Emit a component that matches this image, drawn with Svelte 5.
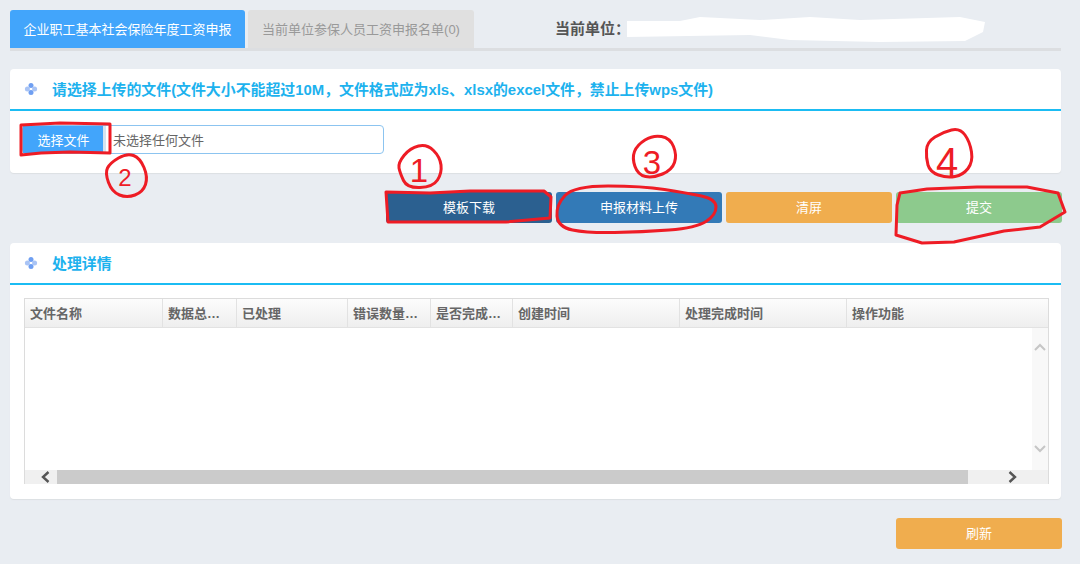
<script>
  const columns = [
    { label: '文件名称', width: 138 },
    { label: '数据总量统计', width: 74 },
    { label: '已处理', width: 111 },
    { label: '错误数量统计', width: 83 },
    { label: '是否完成状态', width: 82 },
    { label: '创建时间', width: 167 },
    { label: '处理完成时间', width: 167 },
    { label: '操作功能', width: 202 }
  ];

  const actions = [
    { label: '模板下载', tone: 'navy' },
    { label: '申报材料上传', tone: 'blue' },
    { label: '清屏', tone: 'orange' },
    { label: '提交', tone: 'green' }
  ];

  // closed smooth line through hand picked points
  function blob(pts) {
    let d = '';
    pts.forEach((p, i) => {
      const next = pts[(i + 1) % pts.length];
      const mx = (p[0] + next[0]) / 2;
      const my = (p[1] + next[1]) / 2;
      if (i === 0) {
        const last = pts[pts.length - 1];
        d += `M${(last[0] + p[0]) / 2} ${(last[1] + p[1]) / 2} `;
      }
      d += `Q${p[0]} ${p[1]} ${mx} ${my} `;
    });
    return d + 'Z';
  }

  // hand drawn marks on top of the screenshot
  const scribbles = [
    'M21 125 L60 123 L110 124 L110 153 L70 152 L41 153 L21 155 Z',
    'M386 192 L430 193 L470 191 L544 191 L551 197 L550 218 L506 222 L388 222 Z',
    blob([[556, 205], [574, 186], [642, 186], [687, 193], [716, 199], [716, 215], [696, 228], [642, 232], [587, 233], [558, 227]]),
    'M900 193 L927 189 L977 187 L1027 187 L1058 193 L1065 212 L1040 227 L1004 231 L954 242 L922 243 L896 235 L897 205 Z'
  ];

  const circledMarks = [
    { n: '2', x: 125, y: 186, size: 24, pts: [[110, 163], [127, 153], [140, 158], [148, 177], [143, 192], [127, 198], [112, 192], [105, 173]] },
    { n: '1', x: 419, y: 182, size: 33, pts: [[398, 163], [410, 148], [427, 144], [440, 157], [442, 173], [433, 187], [407, 188], [400, 173]] },
    { n: '3', x: 652, y: 174, size: 33, pts: [[632, 158], [637, 145], [653, 135], [670, 138], [677, 155], [672, 170], [653, 178], [638, 175]] },
    { n: '4', x: 947, y: 176, size: 40, pts: [[927, 142], [943, 132], [960, 128], [970, 142], [973, 162], [963, 175], [947, 178], [930, 172], [926, 158]] }
  ];
</script>

<div class="page">
  <div class="tabs">
    <div class="tab active">企业职工基本社会保险年度工资申报</div>
    <div class="tab">当前单位参保人员工资申报名单(0)</div>
    <div class="unit">当前单位：</div>
  </div>

  <section class="card upload">
    <header class="card-head">
      <svg class="dot-icon" viewBox="0 0 14 14" width="14" height="14">
        <circle cx="7" cy="3.4" r="2.5" fill="#6f9ff2" />
        <circle cx="3.4" cy="7" r="2.5" fill="#a9c4f5" />
        <circle cx="10.6" cy="7" r="2.5" fill="#a9c4f5" />
        <circle cx="7" cy="10.6" r="2.5" fill="#6f9ff2" />
      </svg>
      <h2>请选择上传的文件(文件大小不能超过10M，文件格式应为xls、xlsx的excel文件，禁止上传wps文件)</h2>
    </header>
    <div class="file-row">
      <div class="file-box">
        <span class="file-btn">选择文件</span>
        <span class="file-name">未选择任何文件</span>
      </div>
    </div>
  </section>

  <div class="actions">
    {#each actions as a}
      <button class="btn {a.tone}">{a.label}</button>
    {/each}
  </div>

  <section class="card detail">
    <header class="card-head">
      <svg class="dot-icon" viewBox="0 0 14 14" width="14" height="14">
        <circle cx="7" cy="3.4" r="2.5" fill="#6f9ff2" />
        <circle cx="3.4" cy="7" r="2.5" fill="#a9c4f5" />
        <circle cx="10.6" cy="7" r="2.5" fill="#a9c4f5" />
        <circle cx="7" cy="10.6" r="2.5" fill="#6f9ff2" />
      </svg>
      <h2>处理详情</h2>
    </header>
    <div class="table">
      <div class="thead">
        {#each columns as c}
          <div class="th" style="width:{c.width}px"><span>{c.label}</span></div>
        {/each}
      </div>
      <div class="tbody">
        <div class="rows"></div>
        <div class="v-track">
          <svg viewBox="0 0 12 8" width="12" height="8"><path d="M1 7 L6 2 L11 7" fill="none" stroke="#c6c6c6" stroke-width="2" /></svg>
          <svg viewBox="0 0 12 8" width="12" height="8"><path d="M1 1 L6 6 L11 1" fill="none" stroke="#c6c6c6" stroke-width="2" /></svg>
        </div>
      </div>
      <div class="h-track">
        <div class="h-end left">
          <svg viewBox="0 0 9 12" width="9" height="12"><path d="M7.5 1 L2 6 L7.5 11" fill="none" stroke="#555" stroke-width="2.4" /></svg>
        </div>
        <div class="h-thumb"></div>
        <div class="h-end right">
          <svg viewBox="0 0 9 12" width="9" height="12"><path d="M1.5 1 L7 6 L1.5 11" fill="none" stroke="#555" stroke-width="2.4" /></svg>
        </div>
      </div>
    </div>
  </section>

  <div class="actions bottom">
    <button class="btn orange">刷新</button>
  </div>

  <svg class="ink" viewBox="0 0 1080 564" width="1080" height="564">
    <path d="M627 21 L680 21 L700 17 L760 20 L810 17 L860 20 L960 17 L985 22 L983 32 L965 41 L880 42 L790 40 L750 35 L627 37 Z" fill="#fff" />
    {#each scribbles as d}
      <path {d} fill="none" stroke="#ee1c25" stroke-width="3" stroke-linejoin="round" />
    {/each}
    {#each circledMarks as m}
      <path d={blob(m.pts)} fill="none" stroke="#ee1c25" stroke-width="3" />
      <text x={m.x} y={m.y} text-anchor="middle" font-size={m.size} class="mark">{m.n}</text>
    {/each}
  </svg>
</div>

<style>
  :global(body) {
    margin: 0;
    background: #e9edf2;
  }

  .page {
    position: relative;
    width: 1080px;
    height: 564px;
    padding: 10px 18px 0 10px;
    box-sizing: border-box;
    overflow: hidden;
    font-family: "Liberation Sans", "Noto Sans CJK SC", sans-serif;
  }

  .tabs {
    display: flex;
    align-items: stretch;
    gap: 3px;
    height: 38px;
    border-bottom: 3px solid #dcdee1;
    margin-right: 1px;
  }

  .tab {
    display: flex;
    align-items: center;
    justify-content: center;
    width: 226px;
    padding-bottom: 1px;
    box-sizing: border-box;
    background: #e0e0e0;
    color: #999;
    font-size: 13px;
    border-radius: 3px 3px 0 0;
  }

  .tab.active {
    width: 235px;
    background: #42a5fb;
    color: #fff;
  }

  .unit {
    margin-left: 78px;
    padding-top: 7px;
    font-size: 15px;
    font-weight: 700;
    color: #555;
  }

  .card {
    background: #fff;
    border-radius: 4px;
    box-shadow: 0 1px 1px #dcdfe3;
    margin-right: 1px;
  }

  .upload {
    margin-top: 18px;
    height: 104px;
  }

  .card-head {
    display: flex;
    align-items: center;
    height: 39px;
    padding: 0 0 1px 14px;
    border-bottom: 2px solid #1bbcf3;
  }

  .card-head h2 {
    margin: 0 0 0 14px;
    font-size: 14.9px;
    font-weight: 700;
    color: #1db2ee;
  }

  .file-row {
    padding: 14px 0 0 12px;
  }

  .file-box {
    display: flex;
    align-items: stretch;
    width: 362px;
    height: 29px;
    box-sizing: border-box;
    border: 1px solid #8cc4f0;
    border-radius: 4px;
  }

  .file-btn {
    display: flex;
    align-items: center;
    justify-content: center;
    width: 83px;
    padding: 0 0 1px 1px;
    box-sizing: border-box;
    background: #42a5fb;
    color: #fff;
    font-size: 13px;
    border-right: 3px solid #d6e4f0;
  }

  .file-name {
    display: flex;
    align-items: center;
    padding: 0 0 1px 7px;
    font-size: 13px;
    color: #666;
  }

  .actions {
    display: flex;
    justify-content: flex-end;
    gap: 4px;
    margin-top: 19px;
  }

  .btn {
    width: 166px;
    height: 31px;
    padding: 0 0 2px;
    border: none;
    border-radius: 3px;
    color: #fff;
    font-family: inherit;
    font-size: 13px;
  }

  .navy { background: #2b6090; }
  .blue { background: #337ab7; }
  .orange { background: #f0ad4e; }
  .green { background: #8dca8d; }

  .detail {
    margin-top: 20px;
    height: 256px;
  }

  .table {
    width: 1025px;
    margin: 13px 0 0 14px;
    box-sizing: border-box;
    border: 1px solid #dcdcdc;
    border-bottom: none;
  }

  .thead {
    display: flex;
    height: 28px;
    background: linear-gradient(#fcfcfc, #eeeeee);
    border-bottom: 1px solid #e2e2e2;
  }

  .th {
    display: flex;
    align-items: center;
    flex-shrink: 0;
    box-sizing: border-box;
    padding: 0 4px 2px 5px;
    border-right: 1px solid #e2e2e2;
    font-size: 13px;
    font-weight: 700;
    color: #666;
  }

  .th:last-child {
    border-right: none;
  }

  .th span {
    overflow: hidden;
    white-space: nowrap;
    text-overflow: ellipsis;
  }

  .tbody {
    display: flex;
    height: 142px;
  }

  .rows {
    flex: 1;
  }

  .v-track {
    display: flex;
    flex-direction: column;
    justify-content: space-between;
    align-items: center;
    box-sizing: border-box;
    width: 16px;
    padding: 15px 0 17px;
    background: #f8f8f8;
  }

  .h-track {
    display: flex;
    height: 14px;
    background: #f0f0f0;
  }

  .h-end {
    display: flex;
    align-items: center;
    justify-content: center;
  }

  .h-end.left {
    width: 32px;
    padding-left: 8px;
    box-sizing: border-box;
  }

  .h-end.right {
    flex: 1;
    padding-left: 8px;
    box-sizing: border-box;
  }

  .h-thumb {
    width: 911px;
    background: #cbcbcb;
  }

  .bottom {
    margin-top: 19px;
  }

  .ink {
    position: absolute;
    left: 0;
    top: 0;
    pointer-events: none;
  }

  .mark {
    fill: #ee1c25;
    font-family: "Liberation Sans", sans-serif;
  }
</style>
